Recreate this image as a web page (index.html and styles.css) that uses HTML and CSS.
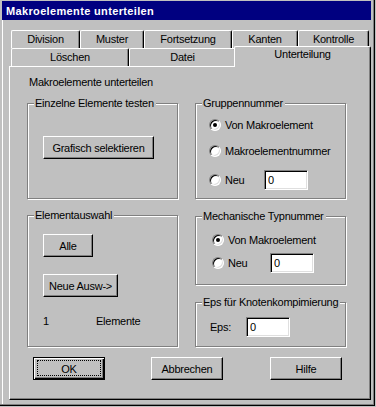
FILE: index.html
```
<html>
	<head>
		<link rel="stylesheet" href="styles.css">
	</head>
	<body>
		<div id="window">
			<div id="titlebar">Makroelemente unterteilen</div>
			<div id="client">
				<div id="tabs">
					<div class="tabrow">
						<div class="tab" id="tabDivision">Division</div>
						<div class="tab" id="tabMuster">Muster</div>
						<div class="tab" id="tabFortsetzung">Fortsetzung</div>
						<div class="tab" id="tabKanten">Kanten</div>
						<div class="tab" id="tabKontrolle">Kontrolle</div>
					</div>
					<div class="tabrow">
						<div class="tab" id="tabLoeschen">Löschen</div>
						<div class="tab" id="tabDatei">Datei</div>
						<div class="tab active" id="tabUnterteilung">Unterteilung</div>
					</div>
				</div>
				<div id="panel">
					<p class="heading">Makroelemente unterteilen</p>
					<div class="columns">
						<div class="column">
							<div class="group" id="grpTest">
								<span class="caption">Einzelne Elemente testen</span>
								<button class="btn" id="btnGrafisch">Grafisch selektieren</button>
							</div>
							<div class="group" id="grpAuswahl">
								<span class="caption">Elementauswahl</span>
								<button class="btn" id="btnAlle">Alle</button>
								<button class="btn" id="btnNeue">Neue Ausw-&gt;</button>
								<div class="count"><span class="countNum">1</span>Elemente</div>
							</div>
						</div>
						<div class="column">
							<div class="group" id="grpGruppe">
								<span class="caption">Gruppennummer</span>
								<div class="radiorow">
									<span class="radio checked"></span>
									<span class="radiotext">Von Makroelement</span>
								</div>
								<div class="radiorow" id="rowGruppeNummer">
									<span class="radio"></span>
									<span class="radiotext">Makroelementnummer</span>
								</div>
								<div class="radiorow" id="rowGruppeNeu">
									<span class="radio"></span>
									<span class="radiotext" id="txtGruppeNeu">Neu</span>
									<input type="text" class="field" value="0" />
								</div>
							</div>
							<div class="group" id="grpMech">
								<span class="caption">Mechanische Typnummer</span>
								<div class="radiorow">
									<span class="radio checked"></span>
									<span class="radiotext">Von Makroelement</span>
								</div>
								<div class="radiorow" id="rowMechNeu">
									<span class="radio"></span>
									<span class="radiotext" id="txtMechNeu">Neu</span>
									<input type="text" class="field" value="0" />
								</div>
							</div>
							<div class="group" id="grpEps">
								<span class="caption">Eps für Knotenkompimierung</span>
								<div class="radiorow">
									<span id="txtEps">Eps:</span>
									<input type="text" class="field" value="0" />
								</div>
							</div>
						</div>
					</div>
					<div class="actions">
						<button class="btn default">OK</button>
						<button class="btn">Abbrechen</button>
						<button class="btn" id="btnHilfe">Hilfe</button>
					</div>
				</div>
			</div>
		</div>
	</body>
</html>
```

FILE: styles.css
```
body {
	margin: 0;
	background-color: #c0c0c0;
	font: 11px "Liberation Sans", Arial, sans-serif;
	letter-spacing: -0.25px;
	color: #000;
	}

#window {
	box-sizing: border-box;
	width: 375px;
	height: 406px;
	padding: 1px 1px 1px 2px;
	border-right: 1px solid #000;
	border-bottom: 1px solid #000;
	box-shadow: inset -1px -1px #808080;
	display: flex;
	flex-direction: column;
	}

#titlebar {
	box-sizing: border-box;
	height: 19px;
	margin-right: 2px;
	padding: 2px 0 0 4px;
	line-height: 17px;
	background-color: #000080;
	color: #fff;
	font-weight: bold;
	letter-spacing: 0.35px;
	}

#client {
	flex: 1;
	border-left: 1px solid #fff;
	padding-left: 6px;
	}

/* tab strip */

#tabs {
	margin-top: 10px;
	padding-left: 2px;
	}

.tabrow {
	display: flex;
	align-items: flex-end;
	height: 18px;
	}

.tab {
	box-sizing: border-box;
	height: 18px;
	padding-top: 2px;
	line-height: 13px;
	text-align: center;
	white-space: nowrap;
	background-color: #c0c0c0;
	border-top: 1px solid #fff;
	border-left: 1px solid #fff;
	border-right: 1px solid #000;
	border-radius: 2px 2px 0 0;
	box-shadow: inset -1px 0 #808080;
	}

.tab.active {
	height: 21px;
	padding-top: 1px;
	margin: 0 0 -1px -2px;
	position: relative;
	z-index: 1;
	}

#tabDivision { width: 69px; }
#tabMuster { width: 64px; }
#tabFortsetzung { width: 88px; }
#tabKanten { width: 66px; }
#tabKontrolle { width: 71px; }
#tabLoeschen { width: 118px; }
#tabDatei { width: 107px; }
#tabUnterteilung { width: 137px; }

/* panel */

#panel {
	box-sizing: border-box;
	width: 362px;
	height: 334px;
	padding: 9px 0 0 17px;
	border: 1px solid;
	border-color: #fff #000 #000 #fff;
	box-shadow: inset -1px -1px #808080;
	}

.heading {
	margin: 0 0 0 2px;
	line-height: 13px;
	}

.columns {
	display: flex;
	gap: 17px;
	margin-top: 14px;
	}

.column {
	width: 151px;
	}

.group {
	position: relative;
	box-sizing: border-box;
	width: 151px;
	border: 1px solid #808080;
	box-shadow: inset 1px 1px #fff, 1px 1px #fff;
	}

.caption {
	position: absolute;
	top: -7px;
	left: 6px;
	padding: 0 2px 0 1px;
	line-height: 13px;
	white-space: nowrap;
	background-color: #c0c0c0;
	}

#grpTest {
	height: 96px;
	padding: 32px 0 0 15px;
	}

#grpAuswahl {
	height: 132px;
	margin-top: 16px;
	padding: 18px 0 0 15px;
	}

#grpGruppe {
	height: 96px;
	padding: 11px 0 0 13px;
	}

#grpMech {
	height: 69px;
	margin-top: 17px;
	padding: 13px 0 0 16px;
	}

#grpEps {
	height: 45px;
	margin-top: 17px;
	padding: 14px 0 0 14px;
	}

/* controls */

.btn {
	display: block;
	box-sizing: border-box;
	height: 23px;
	padding: 0;
	font: inherit;
	letter-spacing: inherit;
	color: #000;
	background-color: #c0c0c0;
	border: 1px solid;
	border-color: #fff #000 #000 #fff;
	border-radius: 0;
	box-shadow: inset -1px -1px #808080;
	}

.btn.default {
	position: relative;
	border-color: #000;
	box-shadow: inset 1px 1px #fff, inset -1px -1px #000, inset -2px -2px #808080;
	}

.btn.default::after {
	content: '';
	position: absolute;
	left: 3px;
	top: 2px;
	right: 3px;
	bottom: 3px;
	border: 1px dotted #000;
	}

#btnGrafisch { width: 111px; }
#btnAlle { width: 50px; }
#btnNeue { width: 75px; margin-top: 17px; }

.count {
	margin-top: 18px;
	line-height: 13px;
	}

.countNum {
	display: inline-block;
	width: 53px;
	}

.radiorow {
	display: flex;
	align-items: center;
	height: 20px;
	}

#rowGruppeNummer { margin-top: 6px; }
#rowGruppeNeu { margin-top: 9px; }
#rowMechNeu { margin-top: 3px; }

.radio {
	box-sizing: border-box;
	flex: none;
	width: 12px;
	height: 12px;
	border-radius: 50%;
	border: 1px solid;
	border-color: #808080 #fff #fff #808080;
	box-shadow: inset 1px 1px #000, inset -1px -1px #dfdfdf;
	background-color: #fff;
	display: flex;
	align-items: center;
	justify-content: center;
	}

.radio.checked::after {
	content: '';
	width: 4px;
	height: 4px;
	border-radius: 50%;
	background-color: #000;
	}

.radiotext {
	margin-left: 4px;
	line-height: 13px;
	white-space: nowrap;
	}

#txtGruppeNeu { width: 39px; }
#txtMechNeu { width: 42px; }
#txtEps { width: 36px; line-height: 13px; }

.field {
	box-sizing: border-box;
	width: 44px;
	height: 20px;
	margin: 0;
	padding: 0 0 0 3px;
	font: inherit;
	letter-spacing: inherit;
	color: #000;
	background-color: #fff;
	border: 1px solid;
	border-color: #808080 #fff #fff #808080;
	box-shadow: inset 1px 1px #000, inset -1px -1px #dfdfdf;
	outline: none;
	}

.actions {
	display: flex;
	gap: 46px;
	margin-top: 10px;
	padding-left: 6px;
	}

.actions .btn {
	width: 72px;
	}

#btnHilfe {
	margin-left: 1px;
	}
```
